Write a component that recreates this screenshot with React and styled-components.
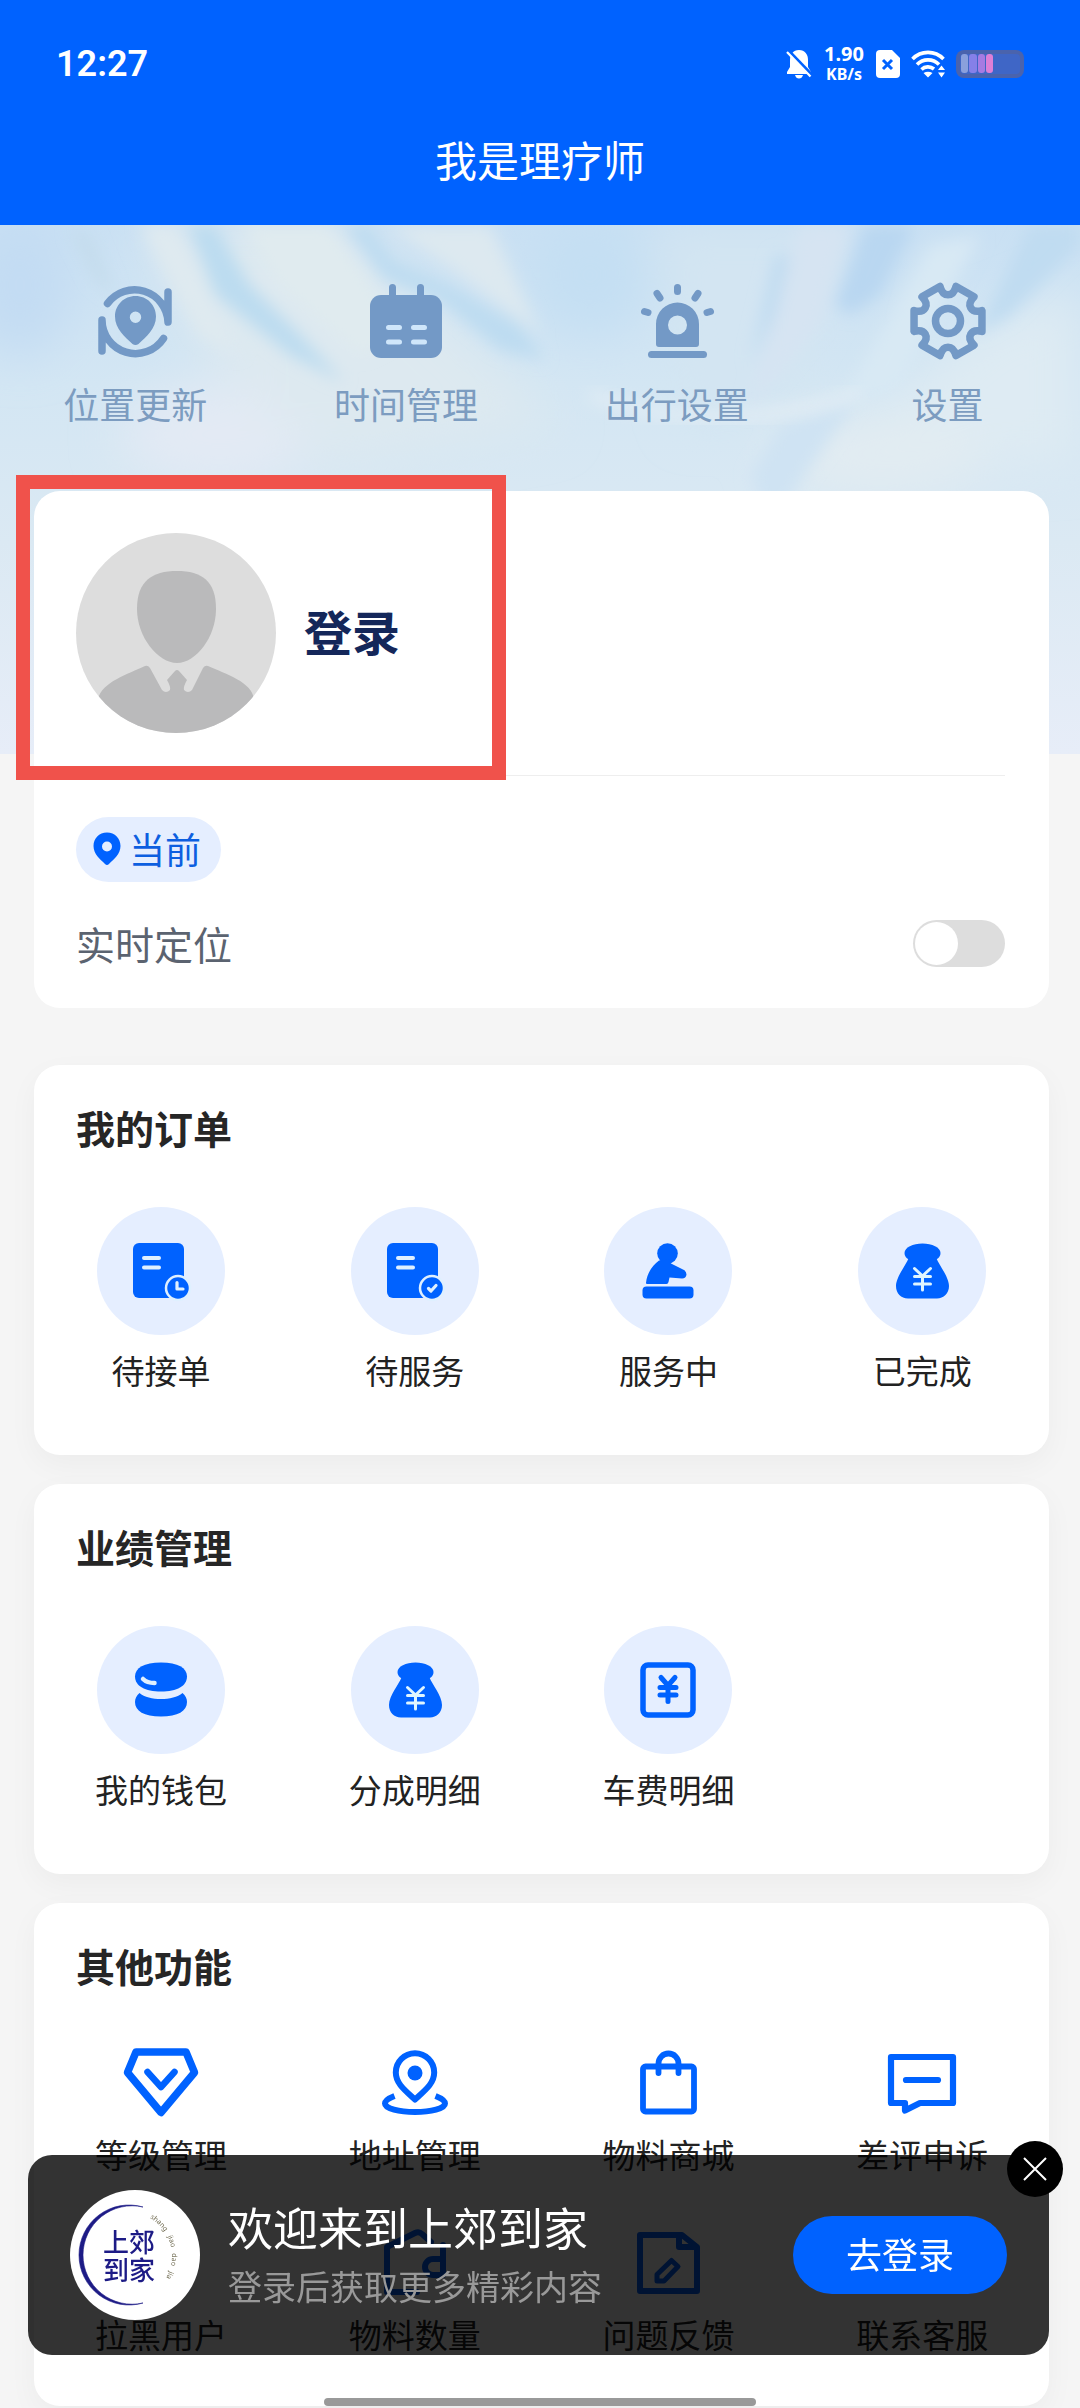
import React, { useState } from "react";
import styled, { createGlobalStyle } from "styled-components";

const GlobalStyle = createGlobalStyle`
  * {
    box-sizing: border-box;
  }
  body {
    margin: 0;
    background: #f5f5f5;
    color: #222;
    font-family: "Noto Sans", "Noto Sans CJK SC", sans-serif;
  }
  button {
    border: none;
    padding: 0;
    background: none;
    color: inherit;
    font-family: inherit;
    cursor: pointer;
  }
  svg {
    display: block;
    flex: none;
  }
`;

const Page = styled.div`
  position: relative;
  min-height: 100vh;
  overflow: hidden;
`;

const Header = styled.header`
  background: #0062ff;
  color: #fff;
  padding: 38px 0 33px;
`;

const StatusBar = styled.div`
  display: flex;
  justify-content: space-between;
  align-items: center;
  height: 52px;
  padding: 0 56px;
`;

const Clock = styled.span`
  font-family: Roboto, sans-serif;
  font-size: 36px;
  font-weight: 600;
`;

const StatusIcons = styled.div`
  display: flex;
  align-items: center;
  gap: 11px;
`;

const Speed = styled.div`
  width: 42px;
  text-align: center;
  font-size: 20px;
  line-height: 20px;
  font-weight: 700;

  small {
    display: block;
    font-size: 16px;
    line-height: 20px;
  }
`;

const PageTitle = styled.h1`
  margin: 40px 0 0;
  font-size: 42px;
  line-height: 62px;
  font-weight: 400;
  text-align: center;
`;

const Main = styled.main`
  position: relative;
  padding: 0 31px 2px 34px;
`;

const SkyArt = styled.svg`
  position: absolute;
  top: 0;
  left: 0;
  width: 100%;
  height: 529px;
`;

const QuickNav = styled.nav`
  position: relative;
  display: grid;
  grid-template-columns: repeat(4, 1fr);
  margin: 0 -34px;
  padding: 58px 0 63px;
`;

const QuickItem = styled.button`
  display: flex;
  flex-direction: column;
  align-items: center;
  gap: 25px;
  color: #7399c6;
  font-size: 36px;
  line-height: 44px;

  span {
    color: #7c9cc0;
  }
`;

const Card = styled.section`
  position: relative;
  border-radius: 26px;
  background: #fff;
`;

const ProfileCard = styled(Card)`
  margin-bottom: 57px;
  padding: 0 44px 41px 42px;
`;

const ProfileRow = styled.div`
  display: flex;
  align-items: center;
  gap: 28px;
  padding: 42px 0;
  border-bottom: 1px solid #eeeeee;
`;

const LoginButton = styled.button`
  color: #14275a;
  font-size: 48px;
  line-height: 64px;
  font-weight: 700;
`;

const Highlight = styled.div`
  position: absolute;
  top: -16px;
  left: -18px;
  width: 490px;
  height: 305px;
  border: 14px solid #f0524b;
  pointer-events: none;
`;

const PlaceTag = styled.div`
  display: inline-flex;
  align-items: center;
  gap: 8px;
  height: 65px;
  margin-top: 41px;
  padding: 0 20px 2px 17px;
  border-radius: 33px;
  background: #e5eeff;
  color: #0d5fe0;
  font-size: 36px;
`;

const LocateRow = styled.div`
  display: flex;
  justify-content: space-between;
  align-items: center;
  height: 48px;
  margin-top: 37px;
  color: #5b6370;
  font-size: 39px;
`;

const Switch = styled.input`
  appearance: none;
  position: relative;
  width: 92px;
  height: 47px;
  margin: 0;
  border-radius: 24px;
  background: #dddddd;
  cursor: pointer;

  &::after {
    content: "";
    position: absolute;
    top: 2px;
    left: 2px;
    width: 43px;
    height: 43px;
    border-radius: 50%;
    background: #fff;
  }
  &:checked {
    background: #0062ff;
  }
  &:checked::after {
    left: 47px;
  }
`;

const MenuCard = styled(Card)`
  padding: 40px 0 ${(props) => (props.$plain ? "47px" : "60px")};
  box-shadow: 0 10px 30px rgba(0, 0, 0, 0.04);

  & + & {
    margin-top: 29px;
  }
`;

const CardTitle = styled.h2`
  margin: 0 42px 54px;
  color: #262626;
  font-size: 39px;
  line-height: 48px;
  font-weight: 700;
`;

const MenuGrid = styled.div`
  display: grid;
  grid-template-columns: repeat(4, 1fr);
  row-gap: 46px;
`;

const MenuItem = styled.button`
  display: flex;
  flex-direction: column;
  align-items: center;
  gap: ${(props) => (props.$plain ? "12px" : "14px")};
  color: #222;
  font-size: 33px;
  line-height: 46px;
`;

const IconDisc = styled.span`
  display: flex;
  align-items: center;
  justify-content: center;
  width: 128px;
  height: 128px;
  border-radius: 50%;
  background: #e5eeff;
  color: #0062ff;
`;

const IconPlain = styled.span`
  color: #0062ff;
`;

const Toast = styled.aside`
  position: fixed;
  left: 28px;
  right: 31px;
  bottom: 53px;
  display: flex;
  align-items: center;
  gap: 28px;
  height: 200px;
  padding: 0 42px;
  border-radius: 24px;
  background: rgba(0, 0, 0, 0.8);
`;

const ToastText = styled.div`
  flex: 1;
`;

const ToastTitle = styled.div`
  color: #fff;
  font-size: 45px;
  line-height: 64px;
`;

const ToastHint = styled.div`
  color: #999;
  font-size: 34px;
  line-height: 52px;
`;

const GoLogin = styled.button`
  width: 214px;
  height: 78px;
  padding-bottom: 4px;
  border-radius: 39px;
  background: #0062ff;
  color: #fff;
  font-size: 36px;
`;

const CloseButton = styled.button`
  position: absolute;
  top: -14px;
  right: -14px;
  display: flex;
  align-items: center;
  justify-content: center;
  width: 56px;
  height: 56px;
  border-radius: 50%;
  background: #000;
  color: #fff;
`;

const HomeBar = styled.div`
  position: fixed;
  left: 30%;
  bottom: 2px;
  width: 40%;
  height: 8px;
  border-radius: 4px;
  background: #999;
`;

/* ---------- icons ---------- */

const Svg = ({ size = 76, children, ...rest }) => (
  <svg
    width={size}
    height={size}
    viewBox={`0 0 ${size} ${size}`}
    fill="none"
    stroke="currentColor"
    strokeLinecap="round"
    strokeLinejoin="round"
    aria-hidden="true"
    {...rest}
  >
    {children}
  </svg>
);

const RelocateIcon = () => (
  <Svg strokeWidth="7.500">
    <path d="M11 20A33.500 33.500 0 0 1 71 38V9Z" stroke="none" />
    <path d="M10.500 20.500A33.500 33.500 0 0 1 71 39V9" />
    <path d="M66.500 55.500A33.500 33.500 0 0 1 5 37V68" />
    <path
      fill="currentColor"
      stroke="none"
      fillRule="evenodd"
      d="M38.500 13C27 13 18 22 18 33.500C18 46 28 54 35.500 61Q38.500 63 41.500 61C49 54 59 46 59 33.500C59 22 50 13 38.500 13ZM38.500 28.500a5.700 5.700 0 1 1 0 11.400a5.700 5.700 0 1 1 0-11.400Z"
    />
  </Svg>
);

const CalendarIcon = () => (
  <Svg strokeWidth="7">
    <path d="M24.500 4.500V15M52.500 4.500V15" />
    <rect x="2" y="12" width="72" height="63" rx="11" fill="currentColor" stroke="none" />
    <path d="M20.500 44.500H31.500M45.500 44.500H56.500M20.500 59H31.500M45.500 59H56.500" stroke="#cfe6fa" strokeWidth="5" />
  </Svg>
);

const SirenIcon = () => (
  <Svg strokeWidth="7">
    <path d="M38.500 4.500V8.500M18 10.500L21 15M59 10.500L56 15M5.500 28.500L9 29.500M71.500 28.500L68 29.500" />
    <path
      fill="currentColor"
      stroke="none"
      fillRule="evenodd"
      d="M17 61V41a21.500 21.500 0 0 1 43 0V61a3 3 0 0 1-3 3H20a3 3 0 0 1-3-3ZM38.500 32.500a9.500 9.500 0 1 0 0 19a9.500 9.500 0 1 0 0-19Z"
    />
    <path d="M12.500 71.500H64.500" />
  </Svg>
);

const polar = (r, deg) => {
  const a = (deg * Math.PI) / 180;
  return `${(38 + r * Math.cos(a)).toFixed(2)} ${(38 + r * Math.sin(a)).toFixed(2)}`;
};

const gearPath =
  [30, 90, 150, 210, 270, 330]
    .map(
      (a, i) =>
        `${i ? "L" : "M"}${polar(35.5, a - 13)}C${polar(24, a - 12)} ${polar(24, a + 12)} ${polar(35.5, a + 13)}`
    )
    .join("") + "Z";

const GearIcon = () => (
  <Svg strokeWidth="7.500" overflow="visible">
    <path d={gearPath} />
    <circle cx="38" cy="38" r="12.500" />
  </Svg>
);

const OrderDoc = ({ children }) => (
  <Svg size={56} strokeWidth="4" overflow="visible">
    <rect x="0" y="0" width="51" height="55" rx="6" fill="currentColor" stroke="none" />
    <path d="M11 15H26M11 24.500H26" stroke="#dff0ff" />
    <circle cx="45" cy="45" r="12" fill="currentColor" stroke="#dff0ff" strokeWidth="2.500" />
    {children}
  </Svg>
);

const PendingIcon = () => (
  <OrderDoc>
    <path d="M44 39.500V46H50" stroke="#dff0ff" strokeWidth="3.200" />
  </OrderDoc>
);

const AcceptedIcon = () => (
  <OrderDoc>
    <path d="M41.500 45.500L44 48L49 42.500" stroke="#dff0ff" strokeWidth="3.200" />
  </OrderDoc>
);

const MassageIcon = () => (
  <Svg size={56}>
    <g fill="currentColor" stroke="none">
      <circle cx="27.500" cy="10.500" r="10.300" />
      <path d="M19 17.500C12 23 7 30 6 40Q6 41 7 41H26.500Q28 41 28.500 39L29.500 34.500L42 35.500Q46 35.500 46.500 31.500Q46.500 28 43 26.500L31 20.500L29 16Z" />
      <rect x="2.500" y="43.500" width="51" height="12" rx="4" />
    </g>
  </Svg>
);

const MoneyBagIcon = () => (
  <Svg size={56}>
    <g fill="currentColor" stroke="none">
      <path d="M28.500 0.500C38 0.500 46.500 4.500 46.500 10C46.500 14 43 17 40 17H17C14 17 10.500 14 10.500 10C10.500 4.500 19 0.500 28.500 0.500Z" />
      <path d="M14.500 15.500H42.500C45 22 55 34 55 43C55 50.500 49.500 55.500 43 55.500H14C7 55.500 2 50.500 2 43C2 34 12 22 14.500 15.500Z" />
    </g>
    <path d="M20.500 25.500L28.500 33L36.500 25.500M20.500 33.500H36.500M20.500 41H36.500M28.500 33V47" stroke="#dff5ff" strokeWidth="3" />
  </Svg>
);

const CoinsIcon = () => (
  <Svg size={56}>
    <g fill="currentColor" stroke="none">
      <path d="M28 0.500C45 0.500 54 6 54 14.500C54 24 44 29.500 28 29.500S2 24 2 14.500C2 6 11 0.500 28 0.500Z" />
      <path d="M6.500 31C16 39 40 39 49.500 31C52.500 33.500 54 36.500 54 40C54 49 45 54.500 28 54.500S2 49 2 40C2 36.500 3.500 33.500 6.500 31Z" />
    </g>
    <path d="M10 17Q14 21 21.500 21" stroke="#dff0ff" strokeWidth="4.500" />
  </Svg>
);

const FareIcon = () => (
  <Svg size={56} strokeWidth="5">
    <rect x="3" y="3" width="50" height="50" rx="5" strokeWidth="5.500" />
    <path d="M21 15.500L28 23.500L35 15.500M20 25.500H36M20 33H36M28 24V39.500" />
  </Svg>
);

const LevelIcon = () => (
  <Svg strokeWidth="7.500">
    <path d="M13 7H63L71.500 27.500L38 67.500L4.500 27.500Z" />
    <path d="M24.500 27L38 42L51.500 27" strokeWidth="6.500" />
  </Svg>
);

const AddressIcon = () => (
  <Svg strokeWidth="6">
    <path d="M38 54.500C27 44.500 18.800 38 18.800 27.500A19.200 19.200 0 0 1 57.200 27.500C57.200 38 49 44.500 38 54.500Z" />
    <circle cx="38" cy="28" r="7.500" fill="currentColor" stroke="none" />
    <path strokeLinecap="butt" d="M17.500 51C11 53.500 8 56 8 58.500C8 63.500 22 67 38 67S68 63.500 68 58.500C68 56 65 53.500 58.500 51" />
  </Svg>
);

const ShopBagIcon = () => (
  <Svg strokeWidth="5.800">
    <rect x="13" y="21.500" width="51" height="45" rx="2.500" />
    <path d="M28.500 28V18.500a10 10 0 0 1 20 0V28" />
  </Svg>
);

const ReviewIcon = () => (
  <Svg strokeWidth="6.200">
    <path d="M7 12H69V58H36L21 65.500V58H7Z" />
    <path d="M22 35H54" />
  </Svg>
);

const BlockUserIcon = () => (
  <Svg strokeWidth="6">
    <circle cx="34" cy="22" r="13" />
    <path d="M12 66V60C12 50 20 44 30 44H40M50 50L64 64M64 50L50 64" />
  </Svg>
);

const StockIcon = () => (
  <Svg strokeWidth="6">
    <path d="M40 67H10V22L38 8Q42 6 45 9L54 17" />
    <path d="M66 20V50H56a8 8 0 0 1 0-16H66" />
  </Svg>
);

const FeedbackIcon = () => (
  <Svg strokeWidth="6">
    <path d="M10 10H52L67 22V66H10Z" />
    <path d="M49 11V22H65" />
    <path d="M27 56V49.500L41.500 35.500L48 41.500L34 56Z" strokeWidth="5" />
  </Svg>
);

const ServiceIcon = () => (
  <Svg strokeWidth="6">
    <path d="M12 44V34a26 26 0 0 1 52 0V50C64 60 54 66 40 66" />
    <path d="M12 34H20V50H12ZM64 34H56V50H64Z" />
  </Svg>
);

const Avatar = () => (
  <svg width="200" height="200" viewBox="0 0 200 200" aria-hidden="true">
    <clipPath id="avatarClip">
      <circle cx="100" cy="100" r="100" />
    </clipPath>
    <g clipPath="url(#avatarClip)">
      <rect width="200" height="200" fill="#dddddd" />
      <g fill="#bababb">
        <path d="M101 38C126 38 140 48 140 76C140 104 120 130 101 130S61 104 61 76C61 48 76 38 101 38Z" />
        <path d="M69 133Q72 132 74 135L86 157Q90 161 94 157Q95 154 91 147L99 138Q101 136 103 138L111 147Q107 154 108 157Q112 161 116 157L127 135Q129 132 132 133C150 141 176 149 178 166V200H22V166C26 149 52 141 69 133Z" />
      </g>
    </g>
  </svg>
);

const PinIcon = () => (
  <svg width="28" height="34" viewBox="0 0 28 34" aria-hidden="true">
    <path
      fill="#0062ff"
      fillRule="evenodd"
      d="M14 0.500C6 0.500 0.500 6.500 0.500 14C0.500 22 7 27 12 32Q14 34 16 32C21 27 27.500 22 27.500 14C27.500 6.500 22 0.500 14 0.500ZM14 9.500a5 5 0 1 1 0 10a5 5 0 1 1 0-10Z"
    />
  </svg>
);

const BrandLogo = () => (
  <svg width="130" height="130" viewBox="0 0 130 130" aria-hidden="true">
    <circle cx="65" cy="65" r="65" fill="#fff" />
    <path
      d="M73 17A50 50 0 1 0 73 113A49.200 49.200 0 1 1 73 17Z"
      fill="#1d1b86"
      stroke="#1d1b86"
      strokeWidth="0.600"
    />
    <path id="logoArc" d="M80 28A44 44 0 0 1 82 103" fill="none" />
    <text fontSize="7" fill="#6f6a50" fontFamily="Noto Sans, sans-serif" style={{ whiteSpace: "pre" }}>
      <textPath href="#logoArc">shang   jiao   dao   jia</textPath>
    </text>
    <g fill="#1d1b86" fontSize="26" fontWeight="500" fontFamily="Noto Sans CJK SC, sans-serif" textAnchor="middle">
      <text x="59" y="62">上郊</text>
      <text x="59" y="90">到家</text>
    </g>
  </svg>
);

const StatusGlyphs = () => (
  <StatusIcons>
    <svg width="26" height="30" viewBox="0 0 26 30" aria-hidden="true">
      <path d="M13 1C19 1 22 5.500 22 11V18L25 23V25H1V23L4 18V11C4 5.500 7 1 13 1Z" fill="#fff" />
      <path d="M9 26H17Q16 29.500 13 29.500T9 26Z" fill="#fff" />
      <path d="M2.500 1.500L26 26" stroke="#0062ff" strokeWidth="3" />
      <path d="M1 3L24.500 27.500" stroke="#fff" strokeWidth="2.200" />
    </svg>
    <Speed>
      1.90
      <small>KB/s</small>
    </Speed>
    <svg width="24" height="28" viewBox="0 0 24 28" aria-hidden="true">
      <path d="M4 0H16L24 8V24Q24 28 20 28H4Q0 28 0 24V4Q0 0 4 0Z" fill="#fff" />
      <path d="M7 10L16 19M16 10L7 19" stroke="#0062ff" strokeWidth="3" />
    </svg>
    <svg width="34" height="28" viewBox="0 0 34 28" fill="none" stroke="#fff" strokeWidth="3.600" aria-hidden="true">
      <path d="M1.500 9A21.500 21.500 0 0 1 32.500 9" />
      <path d="M6 14.500A15.500 15.500 0 0 1 28 14.500" />
      <path d="M10.500 19.500A9.500 9.500 0 0 1 23 19" />
      <path d="M17 27.500L12.500 23Q17 20.500 21.500 23ZM30.500 15.500L34 20H27ZM30.500 27.500L27 22.500H34Z" fill="#fff" stroke="none" />
    </svg>
    <svg width="68" height="28" viewBox="0 0 68 28" aria-hidden="true">
      <rect width="68" height="28" rx="8" fill="#4a63ad" />
      <rect x="4" y="4" width="60" height="20" rx="4" fill="#3f66c6" />
      <rect x="5" y="4" width="7" height="19" rx="3" fill="#8aa0dc" />
      <rect x="13" y="4" width="8" height="19" rx="3" fill="#8580e8" />
      <rect x="22" y="4" width="7" height="19" rx="3" fill="#a67be2" />
      <rect x="30" y="4" width="7" height="19" rx="3" fill="#dd7fd6" />
    </svg>
  </StatusIcons>
);

// soft light beams behind the shortcuts
const Sky = () => (
  <SkyArt viewBox="0 0 1080 529" preserveAspectRatio="none" aria-hidden="true">
    <defs>
      <linearGradient id="skyBase" x1="0" y1="0" x2="0" y2="1">
        <stop offset="0" stopColor="#c9e0f3" />
        <stop offset="0.300" stopColor="#d3e6f3" />
        <stop offset="0.600" stopColor="#dbe9f3" />
        <stop offset="1" stopColor="#e7edf8" />
      </linearGradient>
      <filter id="soft" x="-30%" y="-30%" width="160%" height="160%">
        <feGaussianBlur stdDeviation="8" />
      </filter>
      <filter id="softer" x="-50%" y="-50%" width="200%" height="200%">
        <feGaussianBlur stdDeviation="24" />
      </filter>
    </defs>
    <rect width="1080" height="529" fill="url(#skyBase)" />
    <g filter="url(#softer)">
      <ellipse cx="20" cy="60" rx="50" ry="70" fill="#c3dcf3" />
      <ellipse cx="220" cy="210" rx="100" ry="50" fill="#e3eaf4" />
      <ellipse cx="590" cy="50" rx="60" ry="60" fill="#c4dff3" />
      <path d="M140 0H350L560 200L330 240L200 120Z" fill="#dde9f0" />
      <path d="M650 0H850L800 180L690 200Z" fill="#d3e5f2" />
      <path d="M980 100L1080 60V240H820Z" fill="#deebf3" />
      <ellipse cx="880" cy="230" rx="110" ry="40" fill="#e2ecf2" />
    </g>
    <g filter="url(#soft)">
      <path d="M188 0L215 0L250 60L300 110L345 158L290 130L215 70Z" fill="#bcdcf0" />
      <path d="M345 0H368L395 35L450 60L520 100L545 135L500 125L440 75L385 55Z" fill="#bddcf1" />
      <path d="M240 0L330 0L400 110L360 130L280 60Z" fill="#e0ebef" />
      <path d="M385 0H490L540 110L460 50Z" fill="#dde9f0" />
      <path d="M140 0L175 0L240 130L200 110Z" fill="#dfeaf0" />
      <path d="M70 5L90 10L115 70L95 55Z" fill="#c4dcec" />
      <path d="M865 0H915L880 70L850 90L835 80Z" fill="#b9d7f1" />
      <path d="M800 0H850L820 100L745 190L775 90Z" fill="#d6e4f2" />
      <path d="M775 30L790 30L775 90L750 140Z" fill="#bfdbf1" />
      <path d="M1030 0H1080V20L1010 90L975 110Z" fill="#c0dcf1" />
      <path d="M930 20L980 10L900 160L840 180Z" fill="#d8e9f4" />
      <path d="M780 200L860 170L770 300L750 250Z" fill="#cfe3f3" />
    </g>
    <path
      d="M590 170Q680 200 760 190Q830 180 860 168"
      stroke="#e6eff5"
      strokeWidth="8"
      fill="none"
      filter="url(#soft)"
    />
  </SkyArt>
);

/* ---------- data ---------- */

const shortcuts = [
  { label: "位置更新", Icon: RelocateIcon },
  { label: "时间管理", Icon: CalendarIcon },
  { label: "出行设置", Icon: SirenIcon },
  { label: "设置", Icon: GearIcon },
];

const menus = [
  {
    title: "我的订单",
    items: [
      { label: "待接单", Icon: PendingIcon },
      { label: "待服务", Icon: AcceptedIcon },
      { label: "服务中", Icon: MassageIcon },
      { label: "已完成", Icon: MoneyBagIcon },
    ],
  },
  {
    title: "业绩管理",
    items: [
      { label: "我的钱包", Icon: CoinsIcon },
      { label: "分成明细", Icon: MoneyBagIcon },
      { label: "车费明细", Icon: FareIcon },
    ],
  },
  {
    title: "其他功能",
    plain: true,
    items: [
      { label: "等级管理", Icon: LevelIcon },
      { label: "地址管理", Icon: AddressIcon },
      { label: "物料商城", Icon: ShopBagIcon },
      { label: "差评申诉", Icon: ReviewIcon },
      { label: "拉黑用户", Icon: BlockUserIcon },
      { label: "物料数量", Icon: StockIcon },
      { label: "问题反馈", Icon: FeedbackIcon },
      { label: "联系客服", Icon: ServiceIcon },
    ],
  },
];

function App() {
  const [locating, setLocating] = useState(false);
  const [showToast, setShowToast] = useState(true);

  return (
    <>
      <GlobalStyle />
      <Page>
        <Header>
          <StatusBar>
            <Clock>12:27</Clock>
            <StatusGlyphs />
          </StatusBar>
          <PageTitle>我是理疗师</PageTitle>
        </Header>

        <Main>
          <Sky />
          <QuickNav>
            {shortcuts.map(({ label, Icon }) => (
              <QuickItem key={label}>
                <Icon />
                <span>{label}</span>
              </QuickItem>
            ))}
          </QuickNav>

          <ProfileCard>
            <ProfileRow>
              <Avatar />
              <LoginButton>登录</LoginButton>
            </ProfileRow>
            <PlaceTag>
              <PinIcon />
              当前
            </PlaceTag>
            <LocateRow>
              <label htmlFor="locating">实时定位</label>
              <Switch
                id="locating"
                type="checkbox"
                checked={locating}
                onChange={() => setLocating(!locating)}
              />
            </LocateRow>
            <Highlight />
          </ProfileCard>

          {menus.map(({ title, plain, items }) => {
            const IconBox = plain ? IconPlain : IconDisc;
            return (
              <MenuCard key={title} $plain={plain}>
                <CardTitle>{title}</CardTitle>
                <MenuGrid>
                  {items.map(({ label, Icon }) => (
                    <MenuItem key={label} $plain={plain}>
                      <IconBox>
                        <Icon />
                      </IconBox>
                      {label}
                    </MenuItem>
                  ))}
                </MenuGrid>
              </MenuCard>
            );
          })}
        </Main>

        {showToast && (
          <Toast>
            <BrandLogo />
            <ToastText>
              <ToastTitle>欢迎来到上郊到家</ToastTitle>
              <ToastHint>登录后获取更多精彩内容</ToastHint>
            </ToastText>
            <GoLogin>去登录</GoLogin>
            <CloseButton aria-label="关闭" onClick={() => setShowToast(false)}>
              <svg width="24" height="24" viewBox="0 0 24 24" stroke="currentColor" strokeWidth="2" aria-hidden="true">
                <path d="M1 1L23 23M23 1L1 23" />
              </svg>
            </CloseButton>
          </Toast>
        )}
        <HomeBar />
      </Page>
    </>
  );
}

export default App;
